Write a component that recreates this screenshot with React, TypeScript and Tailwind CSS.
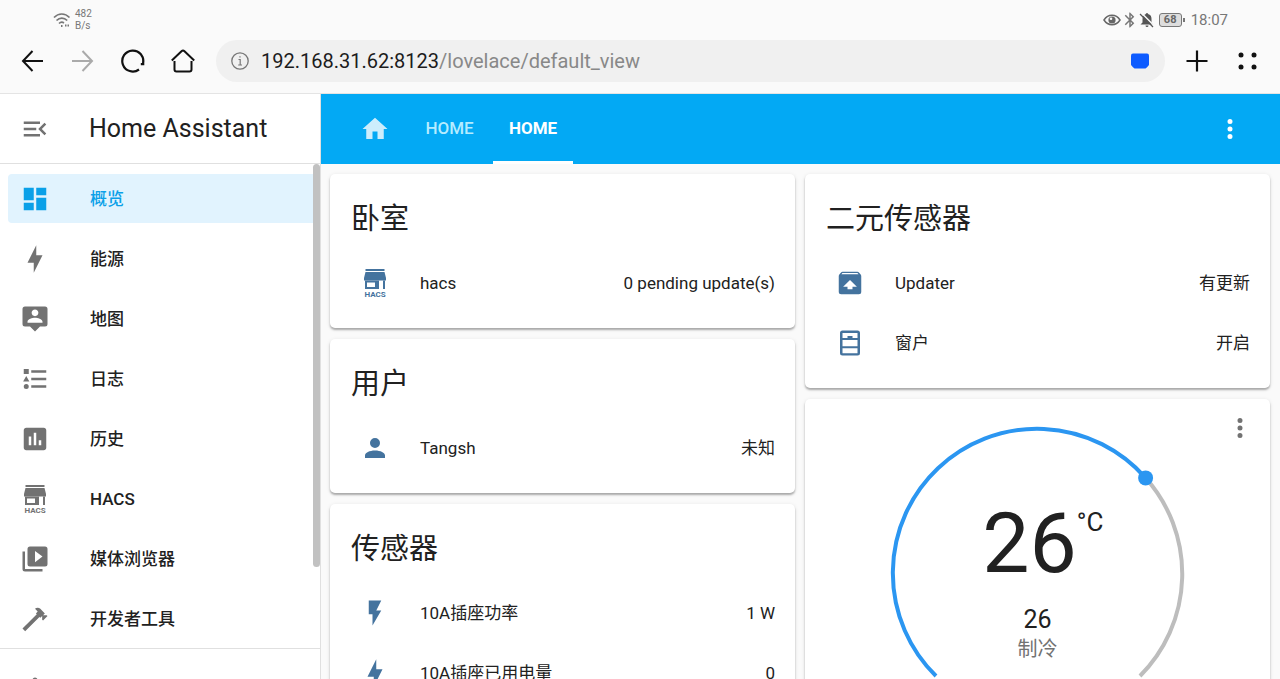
import React from "react";

const P = {
  menu: "M21,15.61L19.59,17L14.58,12L19.59,7L21,8.39L17.44,12L21,15.61M3,6H16V8H3V6M3,13V11H13V13H3M3,18V16H16V18H3Z",
  dashboard: "M13,3V9H21V3M13,21H21V11H13M3,21H11V15H3M3,13H11V3H3V13Z",
  bolt: "M11 15H6L13 1V9H18L11 23V15Z",
  map: "M20,2H4A2,2 0 0,0 2,4V16A2,2 0 0,0 4,18H8L12,22L16,18H20A2,2 0 0,0 22,16V4A2,2 0 0,0 20,2M12,4.3C13.5,4.3 14.7,5.5 14.7,7C14.7,8.5 13.5,9.7 12,9.7C10.5,9.7 9.3,8.5 9.3,7C9.3,5.5 10.5,4.3 12,4.3M18,15H6V14.1C6,12.1 10,11 12,11C14,11 18,12.1 18,14.1V15Z",
  list: "M5,9.5L7.5,14H2.5L5,9.5M3,4H7V8H3V4M5,20A2,2 0 0,0 7,18A2,2 0 0,0 5,16A2,2 0 0,0 3,18A2,2 0 0,0 5,20M9,5V7H21V5H9M9,19H21V17H9V19M9,13H21V11H9V13Z",
  chart: "M19 3H5C3.9 3 3 3.9 3 5V19C3 20.1 3.9 21 5 21H19C20.1 21 21 20.1 21 19V5C21 3.9 20.1 3 19 3M9 17H7V10H9V17M13 17H11V7H13V17M17 17H15V13H17V17Z",
  media: "M4,6H2V20A2,2 0 0,0 4,22H18V20H4V6M20,2H8A2,2 0 0,0 6,4V16A2,2 0 0,0 8,18H20A2,2 0 0,0 22,16V4A2,2 0 0,0 20,2M12,14.5V5.5L18,10L12,14.5Z",
  hammer: "M2 19.63L13.43 8.2L12.72 7.5L14.14 6.07L12 3.89C13.2 2.7 15.09 2.7 16.27 3.89L19.87 7.5L18.45 8.91H21.29L22 9.62L18.45 13.21L17.74 12.5V9.62L16.27 11.04L15.56 10.33L4.13 21.76L2 19.63Z",
  home: "M10,20V14H14V20H19V12H22L12,3L2,12H5V20H10Z",
  dots: "M12,16A2,2 0 0,1 14,18A2,2 0 0,1 12,20A2,2 0 0,1 10,18A2,2 0 0,1 12,16M12,10A2,2 0 0,1 14,12A2,2 0 0,1 12,14A2,2 0 0,1 10,12A2,2 0 0,1 12,10M12,4A2,2 0 0,1 14,6A2,2 0 0,1 12,8A2,2 0 0,1 10,6A2,2 0 0,1 12,4Z",
  account: "M12,4A4,4 0 0,1 16,8A4,4 0 0,1 12,12A4,4 0 0,1 8,8A4,4 0 0,1 12,4M12,14C16.42,14 20,15.79 20,18V20H4V18C4,15.79 7.58,14 12,14Z",
  flash: "M7,2V13H10V22L17,10H13L17,2H7Z",
  update: "M5.12,5H18.87L17.93,4H5.93L5.12,5M20.54,5.23C20.83,5.57 21,6 21,6.5V19A2,2 0 0,1 19,21H5A2,2 0 0,1 3,19V6.5C3,6 3.17,5.57 3.46,5.23L4.84,3.55C5.12,3.21 5.53,3 6,3H18C18.47,3 18.88,3.21 19.15,3.55L20.54,5.23M12,9.5L6.5,15H10V17H14V15H17.5L12,9.5Z",
  window: "M6,2H18A2,2 0 0,1 20,4V20A2,2 0 0,1 18,22H6A2,2 0 0,1 4,20V4A2,2 0 0,1 6,2M6,4V8H10V6.3H14V8H18V4H6M6,9.6V14.6H18V9.6H6M6,16.2V20.2H18V16.2H6Z",
  bluetooth: "M14.88,16.29L13,18.17V14.41M13,5.83L14.88,7.71L13,9.58M17.71,7.71L12,2H11V9.58L6.41,5L5,6.41L10.59,12L5,17.58L6.41,19L11,14.41V22H12L17.71,16.29L13.41,12L17.71,7.71Z",
  bell: "M21,19V20H3V19L5,17V11C5,7.9 7.03,5.17 10,4.29V4A2,2 0 0,1 12,2A2,2 0 0,1 14,4V4.29C16.97,5.17 19,7.9 19,11V17L21,19M14,21A2,2 0 0,1 12,23A2,2 0 0,1 10,21H14Z",
};

function Icon({ d, className = "size-[30px]" }: { d: string; className?: string }) {
  return (
    <svg viewBox="0 0 24 24" fill="currentColor" className={`shrink-0 ${className}`} aria-hidden="true">
      <path fillRule="evenodd" d={d} />
    </svg>
  );
}

function Hacs() {
  return (
    <svg viewBox="0 0 30 30" fill="currentColor" className="size-[30px] shrink-0" aria-hidden="true">
      <path d="M5.500 1H24.500V3H5.500Z" />
      <path d="M5.500 4H24.500L26 10V12.500H4V10Z" />
      <path fillRule="evenodd" d="M5 12.500H19V21H5ZM7 14.500V19H15V14.500Z" />
      <path d="M23 12.500H25V21H23Z" />
      <text x="15" y="29" textAnchor="middle" fontSize="8" fontWeight="700" fontFamily="Roboto, sans-serif">HACS</text>
    </svg>
  );
}

const nav = [
  { label: "概览", d: P.dashboard, active: true },
  { label: "能源", d: P.bolt },
  { label: "地图", d: P.map },
  { label: "日志", d: P.list },
  { label: "历史", d: P.chart },
  { label: "HACS", d: "" },
  { label: "媒体浏览器", d: P.media },
  { label: "开发者工具", d: P.hammer },
];

function StatusBar() {
  return (
    <div className="flex h-10 items-center justify-between pr-[52px] pl-[53px] text-[#777]">
      <div className="flex items-center gap-1">
        <svg viewBox="0 0 18 18" className="size-[18px]" fill="none" stroke="currentColor" strokeWidth="1.7" aria-hidden="true">
          <path d="M1 6.5C5.500 1.800 12 1.800 16.500 6.500M3.500 9.500C6.700 6.300 11 6.300 14.200 9.500M6 12.500C7.600 11 9.500 11 11 12" />
          <path d="M8 15h1.500M12 14.500h1.500M14.500 14.500h1.500" strokeWidth="2" />
        </svg>
        <div className="text-[10px] leading-3">
          <div>482</div>
          <div>B/s</div>
        </div>
      </div>
      <div className="flex items-center">
        <svg viewBox="0 0 18 14" className="h-[14px] w-[18px]" aria-hidden="true">
          <path d="M1 7C5 .8 13 .8 17 7C13 13.200 5 13.200 1 7Z" fill="none" stroke="#666" strokeWidth="1.500" />
          <circle cx="9" cy="7" r="3.600" fill="#666" />
          <circle cx="8" cy="5.800" r="1.300" fill="#fafafa" />
        </svg>
        <Icon d={P.bluetooth} className="size-[18px]" />
        <svg viewBox="0 0 16 16" className="size-4" aria-hidden="true">
          <path d="M8 1C9 1 9 2 9.500 2.300C12 3 12.500 5 12.500 7V10.500L14.500 12.500H1.500L3.500 10.500V7C3.500 5 4.500 3 6.500 2.300C7 2 7 1 8 1ZM6.500 13.500H9.500A1.500 1.500 0 0 1 6.500 13.500Z" fill="#555" />
          <path d="M2.500 1L15.500 14" stroke="#fafafa" strokeWidth="1.500" />
          <path d="M1 2L14 15" stroke="#555" strokeWidth="1.300" />
        </svg>
        <div className="ml-1 flex items-center gap-px">
          <span className="flex h-[14px] w-[23px] items-center justify-center rounded-[3px] border border-[#777] bg-[#ddd] text-[11px] leading-3 font-bold text-[#666]">68</span>
          <span className="h-1 w-0.5 bg-[#777]" />
        </div>
        <span className="ml-1.5 text-[15px] leading-5">18:07</span>
      </div>
    </div>
  );
}

function Browser() {
  return (
    <div className="flex h-[53px] items-start px-[21px] text-[#111]">
      <div className="flex h-[42px] items-center gap-[26px]">
        <button aria-label="Back">
          <svg viewBox="0 0 24 24" className="size-6" fill="none" stroke="currentColor" strokeWidth="2" aria-hidden="true"><path d="M22 12H2M11.500 2L2 12L11.500 22" /></svg>
        </button>
        <button aria-label="Forward" className="text-[#aaa]">
          <svg viewBox="0 0 24 24" className="size-6" fill="none" stroke="currentColor" strokeWidth="2" aria-hidden="true"><path d="M1 12H21M11.500 2L21 12L11.500 22" /></svg>
        </button>
        <button aria-label="Reload">
          <svg viewBox="0 0 24 24" className="size-6" fill="none" stroke="currentColor" strokeWidth="2.200" aria-hidden="true"><path d="M18 20.500A10.500 10.500 0 1 1 22 14.500M22.200 9.500V15.200H19.800" /></svg>
        </button>
        <button aria-label="Home">
          <svg viewBox="0 0 24 24" className="size-6" fill="none" stroke="currentColor" strokeWidth="2" aria-hidden="true"><path d="M.8 11.500L10.500 2.200Q12 .8 13.500 2.200L23.200 11.500M3.500 12V20.500Q3.500 22.500 5.500 22.500H18.500Q20.500 22.500 20.500 20.500V12" /></svg>
        </button>
      </div>
      <div className="ml-[21px] flex h-[42px] flex-1 items-center rounded-full bg-[#f0f0f0] pr-[15px] pl-[15px]">
        <svg viewBox="0 0 18 18" className="size-[18px] shrink-0 text-[#777]" fill="none" stroke="currentColor" aria-hidden="true">
          <circle cx="9" cy="9" r="8.200" strokeWidth="1.300" />
          <path d="M7.500 7.500H9.200V13M7.200 13H11M9 4.300V5.600" strokeWidth="1.200" />
        </svg>
        <a href="#" className="ml-3 flex-1 text-[20px] leading-7 text-[#888]">
          <span className="text-[#1c1c1c]">192.168.31.62:8123</span>/lovelace/default_view
        </a>
        <svg viewBox="0 0 20 16" className="h-4 w-5" aria-hidden="true"><path d="M3 .5H17Q19 .5 19 2.500V11.500Q19 12.500 15.500 15.500H4.500Q1 12.500 1 11.500V2.500Q1 .5 3 .5Z" fill="#0d5bff" /></svg>
      </div>
      <div className="ml-5 flex h-[42px] items-center gap-[26px]">
        <button aria-label="New tab">
          <svg viewBox="0 0 24 24" className="size-6" stroke="currentColor" strokeWidth="2.200" aria-hidden="true"><path d="M12 1.500V22.500M1.500 12H22.500" /></svg>
        </button>
        <button aria-label="Menu">
          <svg viewBox="0 0 24 24" className="size-6" fill="currentColor" aria-hidden="true"><circle cx="6" cy="6" r="2.500" /><circle cx="19" cy="6" r="2.500" /><circle cx="6" cy="18" r="2.500" /><circle cx="19" cy="18" r="2.500" /></svg>
        </button>
      </div>
    </div>
  );
}

function Sidebar() {
  return (
    <aside className="flex w-[321px] shrink-0 flex-col border-r border-[#e0e0e0] bg-white">
      <div className="flex h-[70px] shrink-0 items-center gap-[39px] border-b border-[#e0e0e0] pl-5">
        <button aria-label="Collapse sidebar" className="text-[#727272]"><Icon d={P.menu} /></button>
        <span className="text-[25px] leading-8 text-[#212121]">Home Assistant</span>
      </div>
      <div className="flex border-b border-[#e0e0e0]">
        <nav className="flex h-[484px] flex-1 flex-col gap-[11px] pt-[10px] pl-2">
          {nav.map((n) => (
            <a
              key={n.label}
              href="#"
              className={`flex h-[49px] shrink-0 items-center gap-10 rounded-l-sm pl-3 ${n.active ? "bg-[#e1f3fe] text-[#0aa0e8]" : "text-[#727272]"}`}
            >
              {n.d ? <Icon d={n.d} /> : <Hacs />}
              <span className={`text-[17px] leading-6 font-medium ${n.active ? "" : "text-[#212121]"}`}>{n.label}</span>
            </a>
          ))}
        </nav>
        <div className="h-[403px] w-[7px] rounded-full bg-[#c1c1c1]" />
      </div>
      <div className="flex pt-[26px] pl-5 text-[#727272]"><Icon d={P.bell} /></div>
    </aside>
  );
}

type Row = { icon: React.ReactNode; name: string; value: string };

function Card({ title, rows }: { title: string; rows: Row[] }) {
  return (
    <section className="rounded-[5px] bg-white pb-5 shadow-[0_2px_2px_rgba(0,0,0,0.28),0_1px_4px_rgba(0,0,0,0.1)]">
      <h2 className="px-[21px] pt-6 pb-[18px] text-[29px] leading-[42px] text-[#212121]">{title}</h2>
      <div className="flex flex-col gap-[10px] px-5">
        {rows.map((r) => (
          <div key={r.name} className="flex h-[50px] items-center text-[#44739e]">
            <span className="flex w-[50px] justify-center">{r.icon}</span>
            <span className="ml-5 flex-1 text-[17px] leading-6 text-[#212121]">{r.name}</span>
            <span className="text-[17px] leading-6 text-[#212121]">{r.value}</span>
          </div>
        ))}
      </div>
    </section>
  );
}

function Thermostat() {
  return (
    <section className="relative flex h-[430px] flex-col items-center rounded-[5px] bg-white pt-[25px] shadow-[0_2px_2px_rgba(0,0,0,0.28),0_1px_4px_rgba(0,0,0,0.1)]">
      <button aria-label="More" className="absolute top-[14px] right-[15px] text-[#727272]"><Icon d={P.dots} /></button>
      <div className="relative">
        <svg viewBox="0 0 300 300" className="size-[300px]" fill="none" strokeWidth="4" aria-hidden="true">
          <path d="M257.600 53.900A144.300 144.300 0 0 1 252 252" stroke="#bdbdbd" />
          <path d="M48 252A144.300 144.300 0 1 1 257.600 53.900" stroke="#2b96f1" />
          <circle cx="257.600" cy="53.900" r="7.500" fill="#2b96f1" />
        </svg>
        <div className="absolute inset-0 flex flex-col items-center pt-[70px] text-[#212121]">
          <div className="flex text-[84px] leading-[100px]">
            26<span className="w-4 pt-3 text-[26px] leading-8 whitespace-nowrap">°C</span>
          </div>
          <div className="mt-[11px] text-[25px] leading-[30px]">26</div>
          <div className="text-[20px] leading-[29px] text-[#727272]">制冷</div>
        </div>
      </div>
    </section>
  );
}

export default function App() {
  return (
    <div className="flex h-screen flex-col overflow-hidden bg-[#fafafa] font-[Roboto,'Noto_Sans_CJK_SC',sans-serif]">
      <header className="shrink-0 border-b border-[#e4e4e4]">
        <StatusBar />
        <Browser />
      </header>
      <div className="flex min-h-0 flex-1">
        <Sidebar />
        <main className="flex min-w-0 flex-1 flex-col">
          <div className="flex h-[70px] shrink-0 items-center justify-between bg-[#03a9f4] pr-[35px] pl-[23px] text-white">
            <div className="flex h-full text-[17px] font-medium" role="tablist">
              <button role="tab" aria-label="Home" className="flex w-[62px] items-center justify-center opacity-80"><Icon d={P.home} /></button>
              <button role="tab" className="w-[87px] text-[#b5ecff]">HOME</button>
              <button role="tab" aria-selected="true" className="w-20 border-b-[3px] border-white pt-[3px] font-bold">HOME</button>
            </div>
            <button aria-label="Options"><Icon d={P.dots} /></button>
          </div>
          <div className="grid min-h-0 flex-1 grid-cols-2 items-start gap-[10px] pt-[10px] pr-[10px] pl-[9px]">
            <div className="flex flex-col gap-[11px]">
              <Card title="卧室" rows={[{ icon: <Hacs />, name: "hacs", value: "0 pending update(s)" }]} />
              <Card title="用户" rows={[{ icon: <Icon d={P.account} />, name: "Tangsh", value: "未知" }]} />
              <Card
                title="传感器"
                rows={[
                  { icon: <Icon d={P.flash} />, name: "10A插座功率", value: "1 W" },
                  { icon: <Icon d={P.bolt} />, name: "10A插座已用电量", value: "0" },
                ]}
              />
            </div>
            <div className="flex flex-col gap-[11px]">
              <Card
                title="二元传感器"
                rows={[
                  { icon: <Icon d={P.update} />, name: "Updater", value: "有更新" },
                  { icon: <Icon d={P.window} />, name: "窗户", value: "开启" },
                ]}
              />
              <Thermostat />
            </div>
          </div>
        </main>
      </div>
    </div>
  );
}
